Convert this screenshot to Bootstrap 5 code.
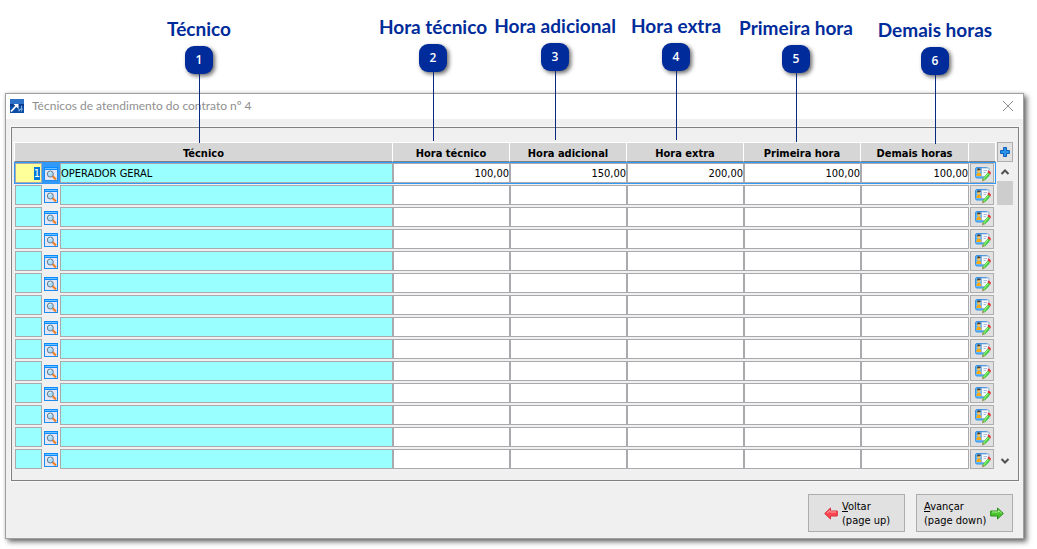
<!DOCTYPE html>
<html lang="pt-BR">
<head>
<meta charset="utf-8">
<meta name="viewport" content="width=device-width, initial-scale=1">
<title>Técnicos de atendimento do contrato</title>
<link href="https://cdn.jsdelivr.net/npm/bootstrap@5.3.0/dist/css/bootstrap.min.css" rel="stylesheet">
<style>
  body { background: #fff; color: #000; font: 11px/14px "DejaVu Sans Condensed", "DejaVu Sans", sans-serif; }
  .stage { padding: 93px 13px 10px 5px; }

  /* window */
  .win { background: #f0f0f0; border: 1px solid #a0a0a0; box-shadow: 3px 3px 5px rgba(0,0,0,.55), 0 0 3px rgba(0,0,0,.15); }
  .win-title { height: 25px; background: #fff; color: #8f8f8f; font: 12px/22px Lato, sans-serif; padding: 0 9px 2px 4px; }
  .win-close { line-height: 0; color: #8c8c8c; }
  .panel { margin: 8px 4px 0 5px; padding: 14px 5px 10px 2px; border: 1px solid #808080; box-shadow: 0 0 0 1px #fafafa; }
  .win-foot { padding: 13px 10px 6px; gap: 11px; }
  .plain { padding: 0; background: none; border: 0; color: inherit; }

  /* grid of technicians */
  .tech { table-layout: fixed; width: 100%; border-collapse: separate; border-spacing: 0; }
  .tech th { height: 20px; padding: 3px 0 0; text-align: center; font-weight: 700; line-height: 15px; color: #000;
             background: #d6d6d6; border-top: 1px solid #fff; border-bottom: 1px solid #808080; border-right: 1px solid #fff; }
  .tech th:first-child { border-left: 1px solid #fff; }
  .tech td { height: 22px; padding: 1px 0; line-height: 0; }
  .tech td:first-child { padding-left: 1px; }
  .tech .act { padding-left: 1px; padding-right: 2px; }
  .tech input { display: block; width: 100%; height: 20px; border: 1px solid #aaaaae; border-radius: 0; padding: 0;
                background: #fff; color: #000; font: inherit; line-height: 18px; outline: 0; }
  .tech .amount { text-align: right; }
  .tech .key { background: #9ff; }
  .tech .code { text-align: right; padding-right: 1px; }
  .tech tr.on .code { background: #ff9; }
  .tech tr.on td { background: #3399f8; }
  .tech tr.on .act { padding: 0 1px; background: #f0f0f0; border: solid #3399f8; border-width: 1px 1px 1px 0; }
  .tech input::selection { background: #0078d7; color: #fff; }
  .edit { display: flex; width: 24px; height: 20px; padding: 1px 0 0 1px; border: 1px solid #adadad; background: #e1e1e1; align-items: center; justify-content: center; }
  .look { display: block; width: 14px; height: 14px; padding: 0; border: 0; background: none; margin: 1px auto 0; }

  /* scroll strip */
  .strip { width: 16px; margin-left: 1px; }
  .plus { width: 16px; height: 20px; padding: 0; background: #e1e1e1; border: 1px solid #adadad; line-height: 0; }
  .arrow { height: 19px; line-height: 0; }
  .thumb { height: 24px; background: #cdcdcd; }

  .nav-btn { width: 97px; height: 38px; padding: 1px 5px 0 7px; background: #e1e1e1; border: 1px solid #adadad; color: #000; text-align: left; }

  /* numbered callouts over the window */
  .tag { position: absolute; z-index: 2; width: 140px; color: #002b9a; }
  .tag-text { font: 700 19px/24px Lato, sans-serif; white-space: nowrap; }
  .tag-num { width: 28px; height: 28px; border-radius: 9px; margin-top: 5px; background: #002b9a; color: #fff;
             font: 600 12px/28px "Open Sans", sans-serif; text-align: center; box-shadow: 2px 2px 4px rgba(0,0,0,.6); }
  .tag-line { width: 1px; height: 69px; background: #0a2a80; }
  .t1 { top: 17px; left: 129px; }
  .t2 { top: 15px; right: 534px; }
  .t3 { top: 14px; right: 412px; }
  .t4 { top: 14px; right: 291px; }
  .t5 { top: 16px; right: 171px; }
  .t6 { top: 18px; right: 32px; }
</style>
</head>
<body>
<svg class="d-none" aria-hidden="true">
  <symbol id="i-look" viewBox="0 0 14 14">
    <rect x=".5" y=".5" width="13" height="13" fill="#e4e6f6" stroke="#1c8cf0"/>
    <rect width="14" height="3" fill="#0a8cff"/><path d="M1 1.500h12" stroke="#6cc0ff"/>
    <path d="M8.500 9l3.500 3.500" stroke="#f08028" stroke-width="2.200"/>
    <circle cx="6.300" cy="7" r="3" fill="#a8dcf8" stroke="#6c7c90"/>
    <path d="M4.800 6.500q.6-1.300 2-1.300" stroke="#fff" fill="none"/>
  </symbol>
  <symbol id="i-edit" viewBox="0 0 16 16">
    <rect x=".5" y="1.500" width="12" height="10.500" rx="1.500" fill="#5cb8fc" stroke="#3a90e4"/>
    <path d="M6.500 2h7.500v8.500H6.500z" fill="#f4faff" stroke="#88a8d0" stroke-width=".8"/>
    <path d="M8.500 4.500h3.500M8.500 6.500h2.500" stroke="#9cb0d0" stroke-width=".8"/>
    <circle cx="3.700" cy="5" r="1.800" fill="#f8c460"/><path d="M1.900 4.500q0-2.200 2-2.200t1.800 1.700z" fill="#504038"/>
    <path d="M1.300 10q0-3.200 2.500-3.200T6.300 10z" fill="#f8a810"/>
    <path d="M14 7.500l-5 5.800" stroke="#46d03c" stroke-width="3"/><path d="M13 8l-4.300 5" stroke="#a8f888" stroke-width="1"/>
    <path d="M13 4.300l2.700 1.700v2.500l-3-2z" fill="#e83030"/><path d="M7.500 12l2.500 2.300-3 1.200z" fill="#8a9a50"/>
  </symbol>
</svg>

<main class="stage position-relative">
  <div class="tag t1 d-flex flex-column align-items-center"><span class="tag-text">Técnico</span><span class="tag-num">1</span><span class="tag-line"></span></div>
  <div class="tag t2 d-flex flex-column align-items-center"><span class="tag-text">Hora técnico</span><span class="tag-num">2</span><span class="tag-line"></span></div>
  <div class="tag t3 d-flex flex-column align-items-center"><span class="tag-text">Hora adicional</span><span class="tag-num">3</span><span class="tag-line"></span></div>
  <div class="tag t4 d-flex flex-column align-items-center"><span class="tag-text">Hora extra</span><span class="tag-num">4</span><span class="tag-line"></span></div>
  <div class="tag t5 d-flex flex-column align-items-center"><span class="tag-text">Primeira hora</span><span class="tag-num">5</span><span class="tag-line"></span></div>
  <div class="tag t6 d-flex flex-column align-items-center"><span class="tag-text">Demais horas</span><span class="tag-num">6</span><span class="tag-line"></span></div>

  <section class="win">
    <header class="win-title d-flex align-items-center">
      <svg width="14" height="14" viewBox="0 0 14 14" aria-hidden="true">
        <rect width="14" height="14" fill="#0c4ca4"/><rect width="14" height="5" fill="#2c70c8"/><path d="M0 5h14v2H0z" fill="#08388c"/>
        <path d="M1 12.500l5.500-6" stroke="#fff" stroke-width="1.800"/><path d="M3.500 5h5v5z" fill="#fff"/>
        <path d="M9 12.500l1.500-3M11.500 12.500v-6M8 11l5-1" stroke="#7ca8e0"/>
      </svg>
      <span class="ms-2">Técnicos de atendimento do contrato nº 4</span>
      <button class="plain win-close ms-auto" type="button" aria-label="Fechar">
        <svg width="12" height="12" viewBox="0 0 12 12"><path d="M1 1l10 10M11 1L1 11" stroke="currentColor"/></svg>
      </button>
    </header>

    <div class="panel d-flex">
      <table class="tech">
        <colgroup>
          <col style="width:28px"><col style="width:18px"><col>
          <col style="width:117px"><col style="width:117px"><col style="width:117px"><col style="width:117px"><col style="width:108px"><col style="width:27px">
        </colgroup>
        <thead>
          <tr><th colspan="3" scope="col">Técnico</th><th scope="col">Hora técnico</th><th scope="col">Hora adicional</th><th scope="col">Hora extra</th><th scope="col">Primeira hora</th><th scope="col">Demais horas</th><th></th></tr>
        </thead>
        <tbody id="rows"></tbody>
      </table>
      <div class="strip d-flex flex-column flex-shrink-0">
        <button class="plus" type="button" aria-label="Adicionar">
          <svg width="10" height="10" viewBox="0 0 10 10"><path d="M3.500 .5h3v3h3v3h-3v3h-3v-3h-3v-3h3z" fill="#2c94e8" stroke="#0c60b8"/></svg>
        </button>
        <button class="plain arrow" type="button" aria-label="Subir"><svg width="10" height="8" viewBox="0 0 10 8"><path d="M1.500 6L5 2.500 8.500 6" fill="none" stroke="#505050" stroke-width="2"/></svg></button>
        <div class="thumb"></div>
        <button class="plain arrow mt-auto" type="button" aria-label="Descer"><svg width="10" height="8" viewBox="0 0 10 8"><path d="M1.500 2L5 5.500 8.500 2" fill="none" stroke="#505050" stroke-width="2"/></svg></button>
      </div>
    </div>

    <footer class="win-foot d-flex justify-content-end">
      <button class="nav-btn d-flex align-items-center" type="button">
        <svg class="ms-2 me-1" width="14" height="14" viewBox="0 0 14 14" aria-hidden="true"><path d="M.7 6.500L6.500 1V4h6.800v5H6.500v3z" fill="#ff4650" stroke="#d8303c"/><path d="M3 6l3-2.500V5h6" fill="none" stroke="#ffa0a4"/></svg>
        <span><u>V</u>oltar<br>(page up)</span>
      </button>
      <button class="nav-btn d-flex align-items-center" type="button">
        <span><u>A</u>vançar<br>(page down)</span>
        <svg class="ms-1" width="14" height="14" viewBox="0 0 14 14" aria-hidden="true"><path d="M13.300 6.500L7.500 1V4H.7v5h6.800v3z" fill="#4cc430" stroke="#288c1c"/><path d="M2 5h6.500V3.500l3 2.500" fill="none" stroke="#a8f090"/></svg>
      </button>
    </footer>
  </section>
</main>

<script src="https://cdn.jsdelivr.net/npm/bootstrap@5.3.0/dist/js/bootstrap.bundle.min.js"></script>
<script>
  const columns = ['Hora técnico', 'Hora adicional', 'Hora extra', 'Primeira hora', 'Demais horas'];
  const data = [['1', 'OPERADOR GERAL', '100,00', '150,00', '200,00', '100,00', '100,00']];
  let html = '';
  for (let i = 0; i < 14; i++) {
    const r = data[i] || [];
    html += `<tr${i === 0 ? ' class="on"' : ''}>
      <td><input class="key code" aria-label="Código ${i + 1}" value="${r[0] || ''}"></td>
      <td><button class="look" type="button" aria-label="Pesquisar"><svg width="14" height="14"><use href="#i-look"/></svg></button></td>
      <td><input class="key" aria-label="Técnico ${i + 1}" value="${r[1] || ''}"></td>` +
      columns.map((c, k) => `<td><input class="amount" aria-label="${c} ${i + 1}" value="${r[k + 2] || ''}"></td>`).join('') +
      `<td class="act"><button class="edit" type="button" aria-label="Editar"><svg width="16" height="16"><use href="#i-edit"/></svg></button></td></tr>`;
  }
  document.getElementById('rows').innerHTML = html;
  const first = document.querySelector('.code');
  first.focus({ preventScroll: true });
  first.select();
</script>
</body>
</html>
